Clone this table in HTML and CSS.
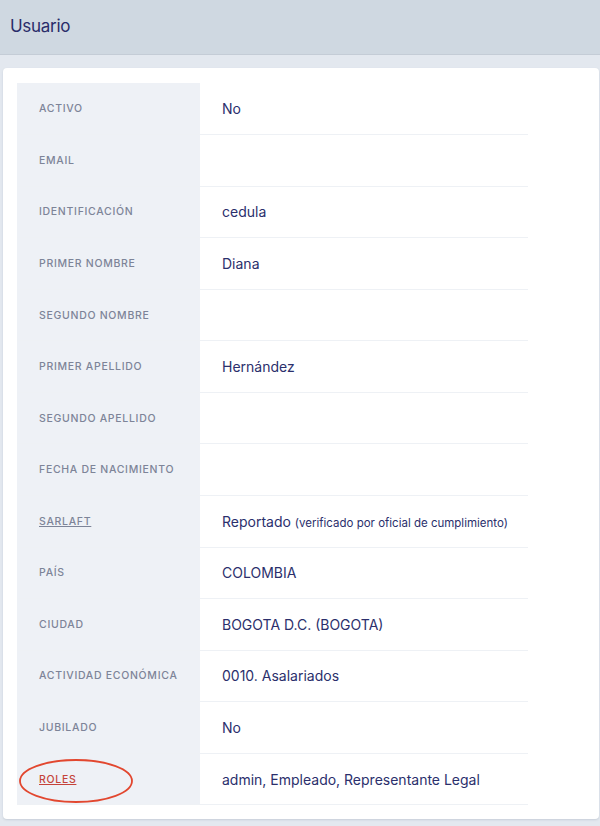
FILE: index.html
```html
<!DOCTYPE html>
<html lang="es">
<head>
<meta charset="utf-8">
<title>Usuario</title>
<link rel="stylesheet" href="styles.css">
</head>
<body>
<header class="topbar"><h1 class="title">Usuario</h1></header>
<main class="page">
  <section class="card">
    <table class="details">
      <tbody>
        <tr><th>Activo</th><td>No</td></tr>
        <tr><th>Email</th><td></td></tr>
        <tr><th>Identificación</th><td>cedula</td></tr>
        <tr><th>Primer nombre</th><td>Diana</td></tr>
        <tr><th>Segundo nombre</th><td></td></tr>
        <tr><th>Primer apellido</th><td>Hernández</td></tr>
        <tr><th>Segundo apellido</th><td></td></tr>
        <tr><th>Fecha de nacimiento</th><td></td></tr>
        <tr><th><a class="link" href="#">Sarlaft</a></th><td>Reportado <small class="note">(verificado por oficial de cumplimiento)</small></td></tr>
        <tr><th>País</th><td>COLOMBIA</td></tr>
        <tr><th>Ciudad</th><td>BOGOTA D.C. (BOGOTA)</td></tr>
        <tr><th>Actividad económica</th><td>0010. Asalariados</td></tr>
        <tr><th>Jubilado</th><td>No</td></tr>
        <tr><th class="marked"><a class="link link-red" href="#">Roles</a>
          <svg class="circle" width="116" height="46" viewBox="0 0 116 46"><ellipse cx="58" cy="23" rx="56" ry="21" fill="none" stroke="#e2472f" stroke-width="1.8"/></svg>
        </th><td>admin, Empleado, Representante Legal</td></tr>
      </tbody>
    </table>
  </section>
</main>
</body>
</html>
```
FILE: styles.css
```css
* { box-sizing: border-box; }
html, body { margin: 0; padding: 0; }
body {
  background: #e3e8ef;
  font-family: Inter, "Noto Sans", "Liberation Sans", sans-serif;
  color: #2b2f6c;
  width: 600px;
  height: 826px;
  overflow: hidden;
}
.topbar {
  height: 55px;
  background: #cfd8e1;
  border-bottom: 1px solid #c4ccd6;
  display: flex;
  align-items: center;
  padding: 0 10px 2px;
}
.title {
  margin: 0;
  font-size: 17px;
  font-weight: 400;
  color: #2a2d6a;
  letter-spacing: -0.3px;
}
.page {
  padding: 13px 1px 0 3px;
}
.card {
  background: #fff;
  border-radius: 4px;
  padding: 15px 70px 14px 14px;
  box-shadow: 0 1px 2px rgba(120, 130, 150, 0.25);
}
.details {
  width: 511px;
  border-collapse: collapse;
  table-layout: fixed;
}
.details th, .details td {
  height: 51.57px;
  border-bottom: 1px solid #eef1f5;
  vertical-align: middle;
  padding: 0 22px;
  white-space: nowrap;
}
.details th {
  width: 183px;
  background: #eef1f6;
  text-align: left;
  font-size: 10.5px;
  font-weight: 500;
  letter-spacing: 0.7px;
  text-transform: uppercase;
  color: #7d8498;
}
.details td {
  font-size: 14px;
  color: #2b2f6c;
  overflow: visible;
}
.note { font-size: 11.5px; }
.link { color: #7d8498; text-decoration: underline; }
.link-red { color: #c5433a; }
.marked { position: relative; }
.circle { position: absolute; left: 1px; top: 4px; }
```
